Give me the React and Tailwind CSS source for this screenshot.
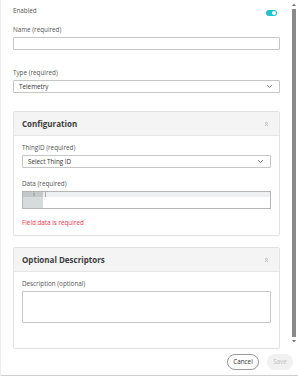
import React from 'react';

const Label = ({ children, className = '' }) => (
  <div className={`shrink-0 text-[6.3px] leading-[10px] text-[#555] ${className}`}>{children}</div>
);

const Chevron = () => (
  <svg width="7" height="5" viewBox="0 0 7 5" className="text-[#666]">
    <path d="M1.2 1.2l2.3 2.3 2.3-2.3" fill="none" stroke="currentColor" strokeWidth="0.9" />
  </svg>
);

const DoubleUp = () => (
  <svg width="5" height="6" viewBox="0 0 5 6" className="text-[#999]">
    <path d="M1 2.6L2.5 1.2 4 2.6M1 4.8L2.5 3.4 4 4.8" fill="none" stroke="currentColor" strokeWidth="0.7" />
  </svg>
);

const Select = ({ value }) => (
  <div className="shrink-0 h-[13px] border border-[#c6c6c6] rounded-[1px] flex items-center justify-between pl-[5px] pr-[6px] bg-white">
    <span className="text-[6.3px] text-[#333]">{value}</span>
    <Chevron />
  </div>
);

const Card = ({ title, children }) => (
  <div className="border border-[#e3e3e3] rounded-[2px] bg-white">
    <div className="h-[24px] bg-[#f4f4f4] border-b border-[#e6e6e6] flex items-center justify-between pl-[8px] pr-[10px]">
      <span className="text-[8px] font-bold text-[#3d3d3d]">{title}</span>
      <DoubleUp />
    </div>
    {children}
  </div>
);

export default function App() {
  return (
    <div
      className="w-[298px] h-[376px] bg-white border-l border-[#ececec] flex flex-col"
      style={{ fontFamily: '"Open Sans", "Noto Sans", sans-serif' }}
    >
      <div className="h-[350px] shrink-0 flex overflow-hidden">
        <div className="w-[290px] pl-[12px] pr-[10px] flex flex-col [&>*]:shrink-0">
          <div className="flex justify-between pt-[6px]">
            <Label className="text-[#444]">Enabled</Label>
            <div className="mt-[4px] mr-[3px] w-[11px] h-[6px] rounded-full bg-[#1fc2cf] flex items-center justify-end pr-[1px]">
              <div className="w-[4px] h-[4px] rounded-full bg-white" />
            </div>
          </div>

          <Label className="mt-[9px]">Name (required)</Label>
          <div className="mt-[2px] h-[13px] border border-[#c6c6c6] rounded-[1px]" />

          <Label className="mt-[18px]">Type (required)</Label>
          <div className="mt-[2px]">
            <Select value="Telemetry" />
          </div>

          <div className="mt-[18px]">
            <Card title="Configuration">
              <div className="px-[8px] pt-[7px] pb-[7px] flex flex-col [&>*]:shrink-0">
                <Label>ThingID (required)</Label>
                <div className="mt-[2px]">
                  <Select value="Select Thing ID" />
                </div>
                <Label className="mt-[11px]">Data (required)</Label>
                <div className="mt-[2px] h-[18px] border border-[#b5b5b5] flex">
                  <div className="w-[20px] bg-[#d6dcdc] flex flex-col">
                    <div className="h-[5px] bg-[#c4c8c8] flex justify-end pr-[8px] text-[4px] leading-[5px] text-[#333]">1</div>
                  </div>
                  <div className="flex-1 flex flex-col">
                    <div className="h-[5px] bg-[#eef0f1] flex">
                      <div className="ml-[2px] w-[1px] h-[5px] bg-[#aaa]" />
                    </div>
                  </div>
                </div>
                <div className="mt-[9px] text-[6.3px] leading-[10px] text-[#f2324a]">Field data is required</div>
              </div>
            </Card>
          </div>

          <div className="mt-[11px]">
            <Card title="Optional Descriptors">
              <div className="px-[8px] pt-[7px] pb-[25px] flex flex-col [&>*]:shrink-0">
                <Label>Description (optional)</Label>
                <div className="mt-[2px] h-[32px] border border-[#c6c6c6] rounded-[1px]" />
              </div>
            </Card>
          </div>
        </div>

        <div className="w-[8px] flex flex-col items-center pt-[3px]">
          <svg width="4" height="3" viewBox="0 0 4 3">
            <path d="M0 3L2 0.5 4 3z" fill="#777" />
          </svg>
          <div className="mt-[3px] w-[4px] h-[328px] bg-[#8a8a8a]" />
          <svg width="4" height="3" viewBox="0 0 4 3" className="mt-[3px]">
            <path d="M0 0L2 2.5 4 0z" fill="#777" />
          </svg>
        </div>
      </div>

      <div className="flex-1 flex justify-end items-start pt-[4px] pr-[5px] gap-[8px] border-b border-[#cfcfcf]">
        <div className="w-[32px] h-[16px] rounded-full border border-[#999] flex items-center justify-center text-[6.3px] text-[#333]">
          Cancel
        </div>
        <div className="w-[26px] h-[16px] rounded-full bg-[#f1f1f1] flex items-center justify-center text-[6.3px] text-[#bdbdbd]">
          Save
        </div>
      </div>
    </div>
  );
}
